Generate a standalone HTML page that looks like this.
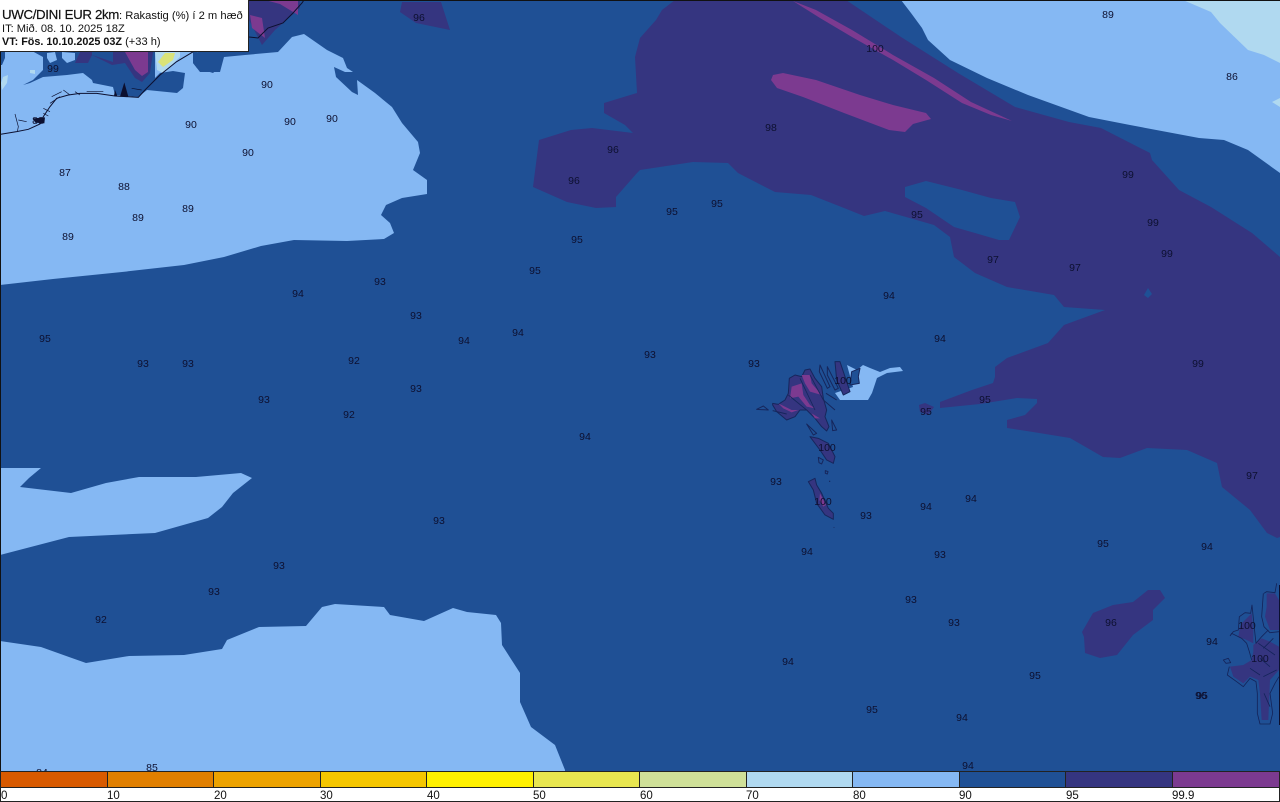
<!DOCTYPE html>
<html><head><meta charset="utf-8"><title>UWC/DINI EUR 2km</title>
<style>
html,body{margin:0;padding:0;background:#fff}
body{width:1280px;height:802px;overflow:hidden;position:relative;font-family:"Liberation Sans",sans-serif}
svg{position:absolute;left:0;top:0;display:block}
#hd{position:absolute;left:0;top:0;width:248px;height:51px;background:#fff;border-right:1px solid #222;border-bottom:1px solid #222;color:#111;font-size:11px;white-space:nowrap}
#hd div{position:absolute;left:2px}
</style></head><body>
<svg width="1280" height="802" viewBox="0 0 1280 802">
<rect width="1280" height="802" fill="#1f5095"/>
<!-- main indigo -->
<path fill="#353580" d="M675,0L662,10L656,20L640,38L635,57L637,93L604,103L604,113L625,125L633,133L592,128L571,130L539,140L533,187L567,202L596,208L616,207L616,197L637,173L640,170L693,162L728,163L738,173L775,192L811,195L844,208L864,216L885,211L934,225L950,237L954,257L975,273L1007,287L1054,295L1064,307L1105,310L1064,325L1048,343L1007,358L995,367L995,377L993,383L972,390L940,402L940,408L980,404L1017,398L1037,399L1037,403L1025,415L1007,420L1007,428L1033,432L1070,438L1103,457L1120,458L1147,448L1187,450L1217,463L1222,487L1250,510L1267,533L1277,538L1280,537L1280,257L1252,233L1211,207L1179,190L1152,160L1150,153L1101,128L1069,122L1015,107L958,73L901,37L846,0Z"/>
<path fill="#1f5095" d="M905,187L926,181L962,190L991,198L1015,202L1020,217L1009,240L999,240L975,233L954,227L926,208L905,197Z"/>
<path fill="#1f5095" d="M1148,288L1152,294L1148,298L1144,295Z"/>
<!-- purple -->
<path fill="#7c3a90" d="M773,75L783,73L816,80L860,95L893,105L926,113L931,119L913,124L905,132L889,130L844,113L803,97L777,88L771,80Z"/>
<path fill="#7c3a90" d="M793,1L816,10L852,30L893,55L934,78L971,102L1012,121L991,115L962,103L926,80L893,60L852,37L820,18Z"/>
<!-- NE light -->
<path fill="#85b8f3" d="M901,0L911,13L922,28L928,40L950,60L987,78L1028,95L1089,117L1130,125L1199,138L1224,140L1248,150L1280,173L1280,0Z"/>
<path fill="#b0d9f0" d="M1183,0L1211,12L1220,23L1248,50L1264,55L1280,63L1280,0Z"/>
<path fill="#b0d9f0" d="M1280,98L1272,102L1280,107Z"/>
<!-- 96 top -->
<path fill="#353580" d="M402,2L441,2L450,30L416,23L400,12Z"/>
<!-- NW light -->
<path fill="#85b8f3" d="M0,40L198,40L198,52L193,63L200,72L220,72L224,57L245,55L278,52L292,37L304,34L327,50L343,58L347,68L353,72L345,72L334,67L336,77L352,92L358,95L357,80L375,93L392,107L402,123L418,142L420,153L413,170L427,180L427,194L402,198L386,205L381,215L390,223L394,233L384,239L347,241L294,240L261,246L224,257L184,265L122,272L53,279L0,285Z"/>
<path fill="#1f5095" d="M32,51L43,57L43,70L33,80L23,85L30,83L43,77L67,75L83,73L92,80L93,83L113,87L115,95L138,97L147,90L177,93L183,88L185,73L173,71L160,73L155,78L155,51Z"/>
<path fill="#1f5095" d="M193,52L197,52L223,57L220,67L213,73L197,68L193,63Z"/>
<path fill="#1f5095" d="M0,52L5,52L5,58L2,65L0,65Z"/>
<path fill="#85b8f3" d="M47,53L55,52L57,60L50,63L47,58Z"/>
<path fill="#85b8f3" d="M62,52L75,53L75,60L67,63L62,58Z"/>
<path fill="#353580" d="M80,52L75,63L88,63L92,55L112,65L125,63L135,78L142,82L150,73L153,52Z"/>
<path fill="#1f5095" d="M92,52L113,52L113,62L92,55Z"/>
<path fill="#7c3a90" d="M125,52L148,52L148,72L142,76L135,70Z"/>
<path fill="#b0d9f0" d="M155,51L180,51L180,57L163,73L157,70Z"/>
<path fill="#e8e650" opacity=".75" d="M158,62L165,53L175,53L173,60L163,67Z"/>
<path fill="#b0d9f0" d="M1,83L3,77L8,75L7,83L2,90ZM30,70L35,70L35,74L30,73Z"/>
<!-- top indigo -->
<path fill="#353580" d="M249,0L249,20L262,45L275,30L300,8L300,0Z"/>
<path fill="#7c3a90" d="M250,15L262,18L265,38L252,28ZM265,0L280,4L298,15L298,0Z"/>
<!-- lower left -->
<path fill="#85b8f3" d="M0,468L41,468L29,478L20,487L71,493L106,483L139,477L196,477L241,473L252,478L233,493L222,507L208,518L155,533L69,537L0,555Z"/>
<path fill="#85b8f3" d="M0,641L41,647L69,657L86,663L129,656L184,655L222,649L227,640L259,627L306,626L322,607L335,604L384,607L390,615L424,621L453,608L467,612L496,615L501,623L502,645L520,673L520,702L531,727L555,745L565,770L565,772L0,772Z"/>
<!-- SE blob -->
<path fill="#353580" d="M1082,632L1093,613L1113,605L1133,602L1148,590L1160,590L1165,598L1153,610L1153,620L1133,635L1117,655L1100,658L1085,653L1084,637Z"/>
<path fill="#353580" d="M919,405L925,403L934,407L928,415L920,412Z"/>
<!-- Faroes light -->
<path fill="#85b8f3" d="M847,365L857,370L863,365L870,368L880,372L890,368L900,367L903,371L887,373L877,378L872,393L868,400L840,400L835,393L853,387Z"/>
<!-- Faroes main -->
<g transform="translate(760,355) scale(.3333)" stroke-linejoin="round">
<path fill="#353580" stroke="#16265c" stroke-width="3" d="M38,145L55,148L75,135L85,115L88,70L105,60L125,65L135,45L150,42L165,70L185,95L190,130L200,165L195,185L207,215L200,228L185,215L165,190L140,165L120,165L105,185L80,195L50,170L38,150Z"/>
<path fill="#7c3a90" d="M95,95L125,85L130,120L150,150L165,160L140,155L115,125L90,130ZM125,60L150,60L155,85L185,120L150,110L135,85ZM55,145L95,165L115,165L95,172L70,160ZM155,175L180,190L165,190Z"/>
<path fill="none" stroke="#16265c" stroke-width="2.5" d="M120,70L165,165M85,120L140,165M150,60L190,135"/>
</g>
<g transform="translate(740,350) scale(.3333)" stroke="#16265c" stroke-width="3" stroke-linejoin="round">
<path fill="#1f5095" d="M240,45L270,110L262,115L238,65ZM262,50L295,115L285,120L262,75ZM50,178L70,168L85,180Z"/>
<path fill="#353580" d="M285,35L300,35L330,125L310,135L290,90Z"/>
<path fill="#1f5095" d="M335,65L360,55L355,80L358,100L330,105Z"/>
<path fill="none" d="M258,130L290,150M250,150L285,180M98,182L140,192"/>
<path fill="#1f5095" d="M275,210L290,240L278,242ZM200,222L230,250L220,255ZM235,322L250,330L245,342L237,338ZM256,362L264,365L262,372L256,370Z"/>
<path fill="#353580" d="M210,260L235,265L265,280L285,320L280,340L260,330L240,300Z"/>
<path fill="#353580" d="M205,395L225,385L230,405L245,430L265,475L280,490L280,508L255,495L230,460L220,420Z"/>
<path fill="#7c3a90" stroke="none" d="M240,430L258,465L250,470L238,450Z"/>
<circle cx="269" cy="394" r="2" fill="#16265c" stroke="none"/>
<circle cx="282" cy="532" r="1.5" fill="#16265c" stroke="none"/>
</g>
<!-- Shetland -->
<g transform="translate(1220,580) scale(.3333)" stroke-linejoin="round">
<path fill="#353580" d="M140,40L165,40L177,60L177,150L150,150L135,110L140,80Z"/>
<path fill="#353580" d="M65,130L95,100L100,150L100,190L80,180L55,170L60,140Z"/>
<path fill="#353580" d="M100,195L125,175L150,185L177,200L177,270L150,300L145,420L125,420L120,340L115,300L90,290L70,310L40,290L30,260L70,255L95,240L100,215Z"/>
<g fill="none" stroke="#14245a" stroke-width="2.5">
<path d="M132,40L140,35L165,38L170,10M130,40L125,110L132,140L150,158L177,155"/>
<path d="M30,168L40,155L55,150L58,110L75,98L92,100L96,75L102,135L108,190L125,170L145,150M30,168L35,160L65,175L80,190L88,215L95,240"/>
<path d="M10,240L25,235L32,248L18,250ZM28,260L22,285L50,305L70,320L90,295L108,305L112,340L112,400L120,432L150,432L158,400L150,340L165,310L177,290"/>
<path d="M115,190L165,225M130,205L160,175M120,235L150,260M90,265L120,285M130,290L170,270M132,340L150,380"/>
</g>
</g>
<rect x="1279" y="585" width="1" height="140" fill="#0c1030"/>
<!-- NW coast -->
<g transform="translate(0,40) scale(.3333)" fill="none" stroke="#0c1030" stroke-width="3">
<path d="M0,283L50,275L85,268L120,252L130,230L150,200L170,175L205,165L240,160L290,160L345,168L415,172L435,150L480,105L530,65L580,35"/>
<path stroke-width="2" d="M45,222L55,260L52,275M55,240L80,245M130,205L150,215M155,170L185,155M190,150L210,165M225,155L240,165M260,155L310,155M150,190L180,170M395,145L425,150M130,220L145,228"/>
<path fill="#0c1030" stroke="none" d="M373,127L385,170L360,170ZM100,235L135,232L133,250L105,248ZM345,150L352,168L342,168Z"/>
</g>
<path fill="none" stroke="#0c1030" stroke-width="1" d="M249,37L258,38L268,28L283,23L293,13L302,3L304,0"/>
<g font-family="'Liberation Sans',sans-serif" font-size="10.5" fill="#0d1030" text-anchor="middle">
<text x="1108" y="18">89</text><text x="1232" y="80">86</text><text x="875" y="52">100</text><text x="771" y="131">98</text><text x="419" y="21">96</text><text x="53" y="72">99</text><text x="38" y="124">88</text>
<text x="267" y="88">90</text><text x="191" y="128">90</text><text x="290" y="125">90</text><text x="332" y="122">90</text><text x="248" y="156">90</text>
<text x="65" y="176">87</text><text x="124" y="190">88</text><text x="138" y="221">89</text><text x="188" y="212">89</text><text x="68" y="240">89</text>
<text x="613" y="153">96</text><text x="574" y="184">96</text><text x="672" y="215">95</text><text x="717" y="207">95</text><text x="577" y="243">95</text><text x="535" y="274">95</text><text x="917" y="218">95</text>
<text x="1128" y="178">99</text><text x="1153" y="226">99</text><text x="1167" y="257">99</text><text x="993" y="263">97</text><text x="1075" y="271">97</text><text x="889" y="299">94</text><text x="940" y="342">94</text><text x="1198" y="367">99</text><text x="985" y="403">95</text><text x="926" y="415">95</text>
<text x="380" y="285">93</text><text x="298" y="297">94</text><text x="416" y="319">93</text><text x="518" y="336">94</text><text x="464" y="344">94</text><text x="45" y="342">95</text><text x="143" y="367">93</text><text x="188" y="367">93</text><text x="354" y="364">92</text><text x="650" y="358">93</text><text x="754" y="367">93</text><text x="416" y="392">93</text><text x="264" y="403">93</text><text x="349" y="418">92</text><text x="585" y="440">94</text>
<text x="843" y="384">100</text><text x="827" y="451">100</text><text x="823" y="505">100</text><text x="776" y="485">93</text><text x="866" y="519">93</text><text x="926" y="510">94</text><text x="971" y="502">94</text><text x="1252" y="479">97</text><text x="439" y="524">93</text><text x="1103" y="547">95</text><text x="1207" y="550">94</text><text x="807" y="555">94</text><text x="940" y="558">93</text><text x="279" y="569">93</text><text x="214" y="595">93</text><text x="911" y="603">93</text><text x="954" y="626">93</text><text x="101" y="623">92</text><text x="1111" y="626">96</text><text x="1247" y="629">100</text><text x="1212" y="645">94</text><text x="1260" y="662">100</text><text x="788" y="665">94</text><text x="1035" y="679">95</text><text x="1201" y="699">96</text><text x="1202" y="699">95</text><text x="872" y="713">95</text><text x="962" y="721">94</text><text x="968" y="769">94</text><text x="152" y="771">85</text><text x="42" y="776">84</text>
</g>
<!-- frame -->
<rect x="0" y="0" width="1280" height="1" fill="#111"/>
<rect x="0" y="0" width="1" height="772" fill="#111"/>
<!-- colorbar -->
<rect x="0" y="771" width="1280" height="31" fill="#fff"/>
<g>
<rect x="1" y="772" width="106" height="15" fill="#d85a00"/><rect x="107" y="772" width="107" height="15" fill="#e07f00"/><rect x="214" y="772" width="106" height="15" fill="#eca200"/><rect x="320" y="772" width="107" height="15" fill="#f5c600"/><rect x="427" y="772" width="106" height="15" fill="#fff000"/><rect x="533" y="772" width="107" height="15" fill="#e8e650"/><rect x="640" y="772" width="106" height="15" fill="#cfe098"/><rect x="746" y="772" width="107" height="15" fill="#b0d9f0"/><rect x="853" y="772" width="106" height="15" fill="#85b8f3"/><rect x="959" y="772" width="107" height="15" fill="#1f5095"/><rect x="1066" y="772" width="106" height="15" fill="#353580"/><rect x="1172" y="772" width="107" height="15" fill="#7c3a90"/>
</g>
<path stroke="#222" stroke-width="1" fill="none" d="M0,771.5H1280M0.5,771V787M107.5,771V787M213.5,771V787M320.5,771V787M426.5,771V787M533.5,771V787M639.5,771V787M746.5,771V787M852.5,771V787M959.5,771V787M1065.5,771V787M1172.5,771V787M1279.5,771V802M0,787.5H1280M0,801.5H1280M0.5,787V802"/>
<g font-family="'Liberation Sans',sans-serif" font-size="11.5" fill="#111">
<text x="1" y="799">0</text><text x="107" y="799">10</text><text x="214" y="799">20</text><text x="320" y="799">30</text><text x="427" y="799">40</text><text x="533" y="799">50</text><text x="640" y="799">60</text><text x="746" y="799">70</text><text x="853" y="799">80</text><text x="959" y="799">90</text><text x="1066" y="799">95</text><text x="1172" y="799">99.9</text>
</g>
</svg>
<div id="hd">
<div style="top:8px;font-size:11.2px;line-height:14px"><span style="font-size:13.3px;letter-spacing:-.35px;-webkit-text-stroke:.2px #111">UWC/DINI EUR 2km</span>: Rakastig (%) í 2 m hæð</div>
<div style="top:23px;line-height:13px;font-size:11.1px">IT: Mið. 08. 10. 2025 18Z</div>
<div style="top:36px;line-height:13px;font-size:11.1px"><b style="font-size:10.8px">VT: Fös. 10.10.2025 03Z</b> (+33 h)</div>
</div>
</body></html>
